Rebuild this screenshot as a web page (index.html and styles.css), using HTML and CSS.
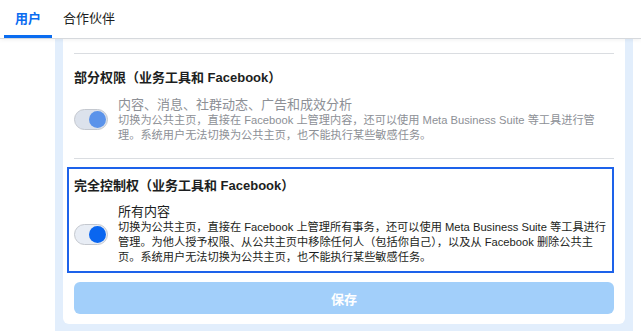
FILE: index.html
```html
<!DOCTYPE html>
<html lang="zh-CN">
<head>
    <meta charset="UTF-8">
    <meta name="viewport" content="width=device-width, initial-scale=1.0">
    <title>权限</title>
    <link rel="stylesheet" href="styles.css">
</head>
<body>

    <div class="tabs">
        <div class="tab active">用户</div>
        <div class="tab">合作伙伴</div>
    </div>

    <div class="panel">
        <div class="card">
            <div class="divider"></div>

            <!-- Partial access -->
            <div class="option">
                <div class="option-head">部分权限（业务工具和 Facebook）</div>
                <div class="option-row">
                    <span class="toggle dim"><span class="knob"></span></span>
                    <div class="option-text muted">
                        <div class="option-title">内容、消息、社群动态、广告和成效分析</div>
                        <div class="option-desc">切换为公共主页，直接在 Facebook 上管理内容，还可以使用 Meta Business Suite 等工具进行管理。系统用户无法切换为公共主页，也不能执行某些敏感任务。</div>
                    </div>
                </div>
            </div>

            <div class="divider"></div>

            <!-- Full control -->
            <div class="option selected">
                <div class="option-head">完全控制权（业务工具和 Facebook）</div>
                <div class="option-row">
                    <span class="toggle"><span class="knob"></span></span>
                    <div class="option-text">
                        <div class="option-title">所有内容</div>
                        <div class="option-desc">切换为公共主页，直接在 Facebook 上管理所有事务，还可以使用 Meta Business Suite 等工具进行管理。为他人授予权限、从公共主页中移除任何人（包括你自己），以及从 Facebook 删除公共主页。系统用户无法切换为公共主页，也不能执行某些敏感任务。</div>
                    </div>
                </div>
            </div>

            <button class="save" disabled>保存</button>
        </div>
    </div>

</body>
</html>
```

FILE: styles.css
```css
body {
    margin: 0;
    padding: 0;
    background: #fff;
    font-family: "Liberation Sans", "Noto Sans CJK SC", sans-serif;
    color: #1c1e21;
    overflow: hidden;
}

/* Tabs */
.tabs {
    display: flex;
    height: 38px;
    padding-left: 4px;
    border-bottom: 1px solid #d6d9dd;
    box-shadow: 0 1px 4px rgba(0, 0, 0, 0.06);
    position: relative;
}

.tab {
    padding: 0 11px;
    font-size: 13px;
    line-height: 36px;
    color: #1c1e21;
    border-bottom: 3px solid transparent;
    box-sizing: border-box;
    height: 38px;
    padding-top: 1px;
}

.tab.active {
    color: #0a6cf0;
    font-weight: bold;
    border-bottom-color: #0a6cf0;
}

/* Panel + card */
.panel {
    margin-left: 55px;
    width: 578px;
    padding: 0 8px 8px;
    box-sizing: border-box;
    background: #e2eefc;
}

.card {
    background: #fff;
    padding: 14px 11px 10px;
    border-radius: 0 0 6px 6px;
}

.divider {
    height: 1px;
    background: #dadde1;
}

.option {
    padding: 15px 0 15px;
}

.option-head {
    font-size: 13px;
    font-weight: bold;
    line-height: 17px;
}

.option-row {
    display: flex;
    align-items: center;
    gap: 10px;
    margin-top: 10px;
}

.option-text {
    flex: 1;
}

.option-title {
    font-size: 13px;
    line-height: 17px;
}

.option-desc {
    font-size: 11.2px;
    line-height: 15px;
}

.option-text.muted {
    color: #8d9096;
}

.option.selected {
    margin: 8px 0 0 -7px;
    padding: 8px 0 6px 5px;
    border: 2px solid #1d62ea;
}

.option.selected .option-row {
    margin-top: 9px;
}

/* Toggle */
.toggle {
    position: relative;
    flex: none;
    width: 34px;
    height: 21px;
    border-radius: 11px;
    box-sizing: border-box;
    border: 1px solid #c4c8cf;
    background: #e8edf5;
}

.toggle .knob {
    position: absolute;
    top: 1px;
    right: 1px;
    width: 17px;
    height: 17px;
    border-radius: 50%;
    background: #0a66f0;
}

.toggle.dim {
    background: #dce2ec;
}

.toggle.dim .knob {
    background: #5b93ea;
}

/* Save */
.save {
    display: block;
    width: 100%;
    height: 32px;
    margin-top: 9px;
    border: none;
    border-radius: 6px;
    background: #a2cffa;
    color: #fff;
    font-family: inherit;
    font-size: 13px;
    font-weight: bold;
}
```
